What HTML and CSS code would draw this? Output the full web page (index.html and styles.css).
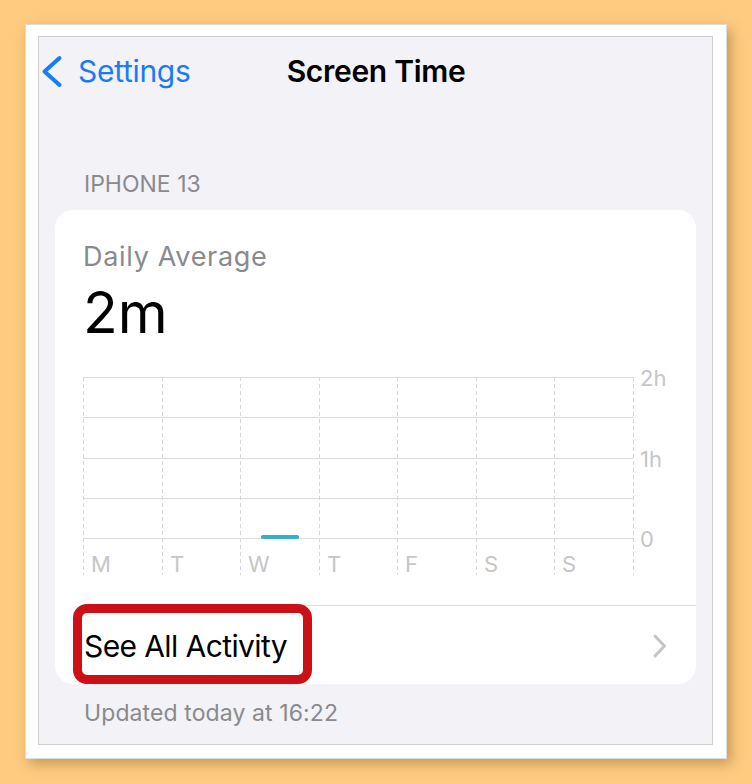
FILE: index.html
```html
<!DOCTYPE html>
<html lang="en">
<head>
<meta charset="utf-8">
<title>Screen Time</title>
<link rel="stylesheet" href="styles.css">
</head>
<body>
<div class="frame">
  <div class="screen">
    <header class="nav">
      <div class="nav-back">
        <svg class="back-icon" width="24" height="36" viewBox="0 0 24 36" aria-hidden="true">
          <path d="M19.5 5 L4.5 18.5 L19.5 32" fill="none" stroke="#1a7cf5" stroke-width="4" stroke-linecap="round" stroke-linejoin="round"/>
        </svg>
        <span class="back-label">Settings</span>
      </div>
      <h1 class="nav-title">Screen Time</h1>
      <div class="nav-spacer"></div>
    </header>

    <div class="section-header">IPHONE 13</div>

    <section class="card">
      <div class="card-body">
        <div class="avg-label">Daily Average</div>
        <div class="avg-value">2m</div>
        <svg class="chart" width="600" height="212" viewBox="0 0 600 212" aria-label="Daily usage chart">
          <g class="hgrid" stroke="#dcdcde" stroke-width="1">
            <line x1="0" y1="11.5" x2="550" y2="11.5"/>
            <line x1="0" y1="51.5" x2="550" y2="51.5"/>
            <line x1="0" y1="92.5" x2="550" y2="92.5"/>
            <line x1="0" y1="132.5" x2="550" y2="132.5"/>
            <line x1="0" y1="172.5" x2="550" y2="172.5"/>
          </g>
          <g class="vgrid" stroke="#d6d6d8" stroke-width="1" stroke-dasharray="4 3">
            <line x1="0.5" y1="11" x2="0.5" y2="209"/>
            <line x1="79.5" y1="11" x2="79.5" y2="209"/>
            <line x1="157.5" y1="11" x2="157.5" y2="209"/>
            <line x1="236.5" y1="11" x2="236.5" y2="209"/>
            <line x1="314.5" y1="11" x2="314.5" y2="209"/>
            <line x1="393.5" y1="11" x2="393.5" y2="209"/>
            <line x1="471.5" y1="11" x2="471.5" y2="209"/>
            <line x1="550.5" y1="11" x2="550.5" y2="209"/>
          </g>
          <rect x="178" y="169" width="38" height="4" rx="1.8" fill="#34b0c8"/>
          <g class="day-labels" fill="#c6c6c8" font-size="22">
            <text x="8" y="206">M</text>
            <text x="87" y="206">T</text>
            <text x="165" y="206">W</text>
            <text x="244" y="206">T</text>
            <text x="322" y="206">F</text>
            <text x="401" y="206">S</text>
            <text x="479" y="206">S</text>
          </g>
          <g class="axis-labels" fill="#c6c6c8" font-size="22">
            <text x="557" y="20">2h</text>
            <text x="557" y="101">1h</text>
            <text x="557" y="181">0</text>
          </g>
        </svg>
      </div>
      <div class="row">
        <span class="row-label">See All Activity</span>
        <svg class="row-chevron" width="16" height="26" viewBox="0 0 16 26" aria-hidden="true">
          <path d="M3 3 L12.5 13 L3 23" fill="none" stroke="#c4c4c7" stroke-width="3" stroke-linecap="round" stroke-linejoin="round"/>
        </svg>
        <span class="highlight"></span>
      </div>
    </section>

    <div class="footer-note">Updated today at 16:22</div>
  </div>
</div>
</body>
</html>
```

FILE: styles.css
```css
* {
  box-sizing: border-box;
}

html, body {
  margin: 0;
  padding: 0;
}

body {
  width: 752px;
  height: 784px;
  background: #ffcb80;
  font-family: Inter, "Liberation Sans", sans-serif;
  overflow: hidden;
}

.frame {
  margin: 24px 0 0 25px;
  width: 702px;
  height: 735px;
  background: #ffffff;
  border: 1px solid #dcdcdc;
  padding: 11px 13px 13px 12px;
  box-shadow: 4px 5px 12px rgba(90, 60, 10, 0.35);
}

.screen {
  width: 100%;
  height: 100%;
  background: #f2f2f7;
  border: 1px solid #cfcfd2;
}

.nav {
  display: grid;
  grid-template-columns: 1fr auto 1fr;
  align-items: center;
  padding: 15px 0 0 1px;
  height: 53px;
}

.nav-back {
  display: flex;
  align-items: center;
  gap: 14px;
}

.back-icon {
  display: block;
}

.back-label {
  color: #1a7cf5;
  font-size: 30px;
  line-height: 38px;
  letter-spacing: -0.3px;
}

.nav-title {
  margin: 0;
  font-size: 30px;
  line-height: 38px;
  font-weight: 600;
  color: #000;
  letter-spacing: -0.3px;
}

.section-header {
  margin-top: 80px;
  padding-left: 45px;
  font-size: 23px;
  line-height: 28px;
  color: #8a8a8e;
}

.card {
  margin: 12px 16px 0 16px;
  background: #ffffff;
  border-radius: 18px;
}

.card-body {
  padding: 31px 0 0 28px;
}

.avg-label {
  font-size: 27px;
  line-height: 32px;
  color: #8a8a8e;
  letter-spacing: 0.7px;
}

.avg-value {
  margin-top: 12px;
  font-size: 57px;
  line-height: 56px;
  color: #000;
  letter-spacing: 0;
}

.chart {
  display: block;
  margin-top: 25px;
  margin-bottom: 27px;
  font-family: Inter, "Liberation Sans", sans-serif;
}

.row {
  position: relative;
  display: flex;
  align-items: center;
  justify-content: space-between;
  margin-left: 29px;
  padding: 2px 28px 0 0;
  height: 79px;
  border-top: 1px solid #dedee0;
}

.row-label {
  font-size: 30px;
  line-height: 36px;
  color: #000;
  letter-spacing: -0.6px;
}

.row-chevron {
  display: block;
}

.highlight {
  position: absolute;
  left: -11px;
  top: -2px;
  width: 239px;
  height: 80px;
  border: 9px solid #cb1016;
  border-radius: 14px;
  pointer-events: none;
}

.footer-note {
  margin-top: 15px;
  padding-left: 45px;
  font-size: 23px;
  line-height: 28px;
  color: #8a8a8e;
  letter-spacing: 0.1px;
}
```
